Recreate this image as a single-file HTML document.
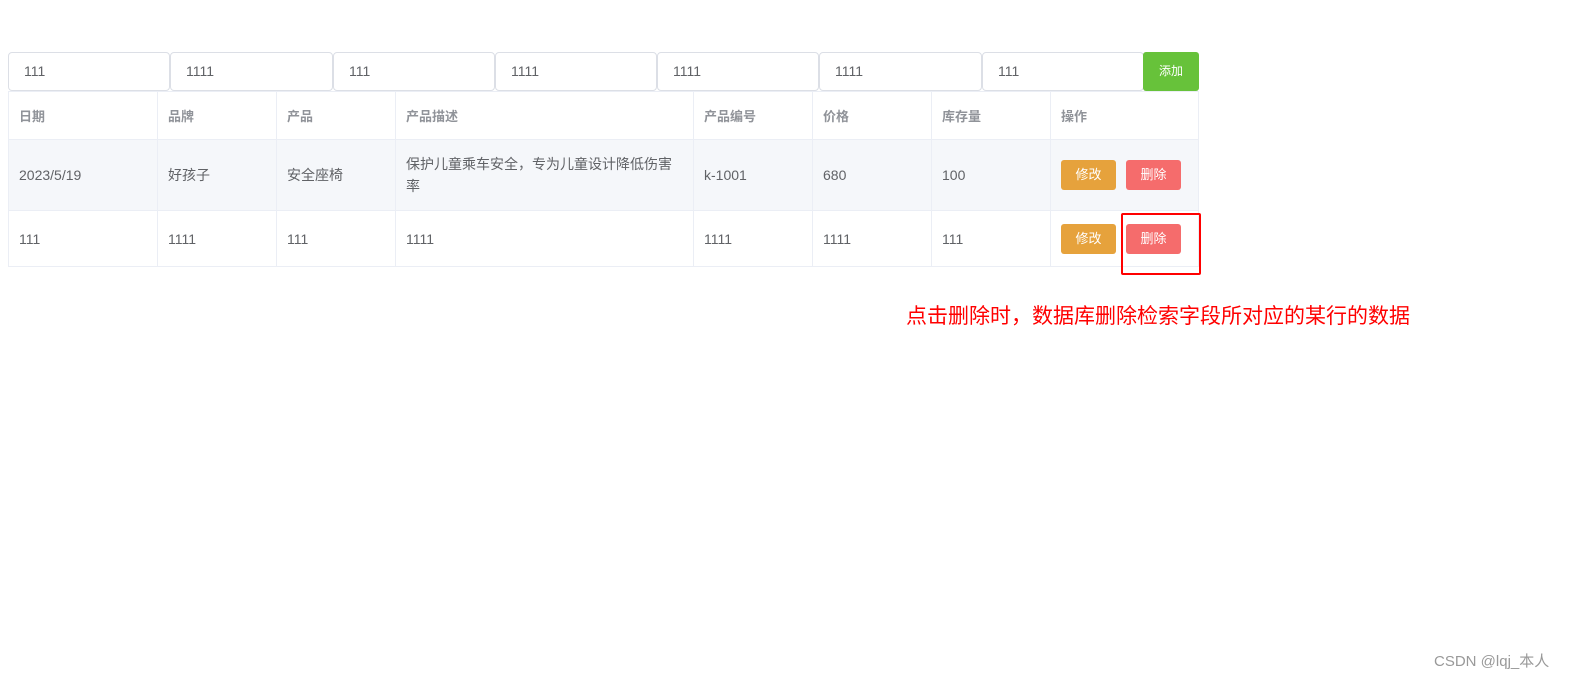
<!DOCTYPE html><html><head><meta charset="utf-8"><style>
body{margin:0;width:1580px;height:681px;background:#fff;position:relative;font-family:"Liberation Sans","Noto Sans CJK SC",sans-serif;overflow:hidden}
.in{position:absolute;top:52px;height:37px;border:1px solid #dcdfe6;border-radius:4px;box-sizing:content-box;font-size:14px;line-height:37px;color:#606266;padding-left:15px}
.add{position:absolute;left:1143px;top:52px;width:56px;height:39px;background:#67c23a;color:#fff;font-size:12px;line-height:39px;text-align:center;border-radius:3px}
table{position:absolute;left:8px;top:91px;border-collapse:collapse;font-size:14px;color:#606266}
td,th{border:1px solid #ebeef5;padding:0 10px;text-align:left;vertical-align:middle;box-sizing:border-box}
th{color:#909399;font-weight:bold;font-size:13px;height:48px}
.b{display:inline-block;width:55px;height:30px;line-height:30px;text-align:center;color:#fff;font-size:13px;border-radius:3px}
.y{background:#e6a23c}.r{background:#f56c6c;margin-left:10px}
</style></head><body>
<div class="in" style="left:8px;width:145px">111</div>
<div class="in" style="left:170px;width:146px">1111</div>
<div class="in" style="left:333px;width:145px">111</div>
<div class="in" style="left:495px;width:145px">1111</div>
<div class="in" style="left:657px;width:145px">1111</div>
<div class="in" style="left:819px;width:146px">1111</div>
<div class="in" style="left:982px;width:145px">111</div>
<div class="add">添加</div>
<table>
<tr><th style="width:149px">日期</th><th style="width:119px">品牌</th><th style="width:119px">产品</th><th style="width:298px">产品描述</th><th style="width:119px">产品编号</th><th style="width:119px">价格</th><th style="width:119px">库存量</th><th style="width:148px">操作</th></tr>
<tr style="background:#f5f7fa;height:71px"><td>2023/5/19</td><td>好孩子</td><td>安全座椅</td><td style="line-height:22px">保护儿童乘车安全，专为儿童设计降低伤害率</td><td>k-1001</td><td>680</td><td>100</td><td><span class="b y">修改</span><span class="b r">删除</span></td></tr>
<tr style="height:56px"><td>111</td><td>1111</td><td>111</td><td>1111</td><td>1111</td><td>1111</td><td>111</td><td><span class="b y">修改</span><span class="b r">删除</span></td></tr>
</table>
<div style="position:absolute;left:1121px;top:213px;width:76px;height:58px;border:2px solid #f00;border-radius:2px"></div>
<div style="position:absolute;left:906px;top:304px;font-size:21px;color:#f00;line-height:26px">点击删除时，数据库删除检索字段所对应的某行的数据</div>
<div style="position:absolute;left:1434px;top:650px;font-size:15px;color:#999">CSDN @lqj_本人</div>
</body></html>
